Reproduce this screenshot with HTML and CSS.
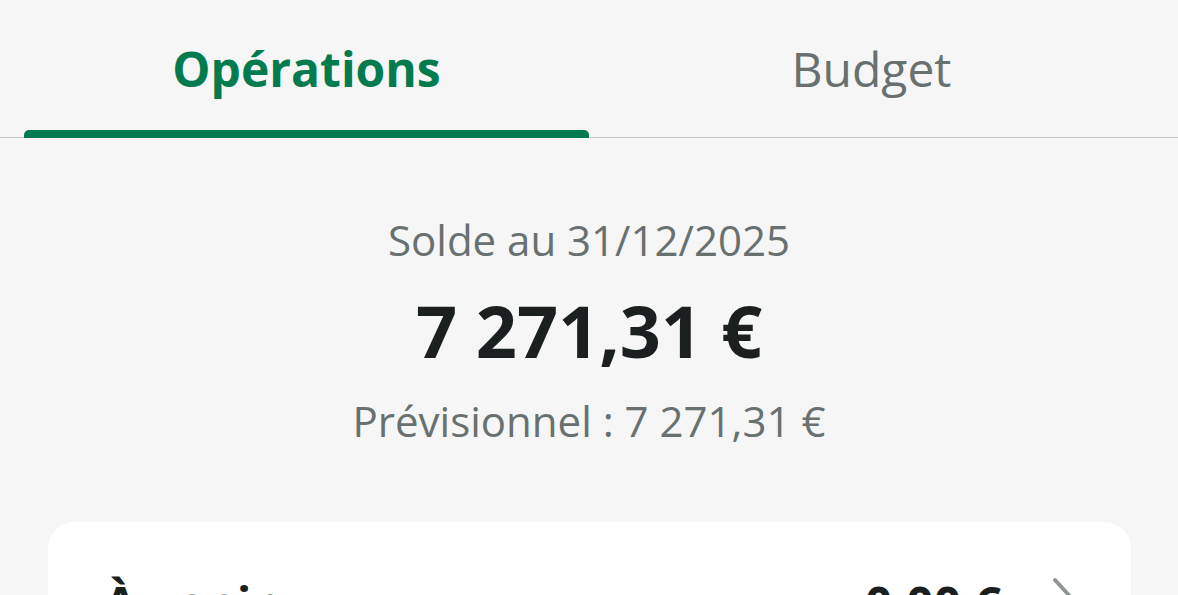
FILE: index.html
```html
<!DOCTYPE html>
<html lang="fr">
<head>
<meta charset="utf-8">
<title>Opérations</title>
<link rel="stylesheet" href="styles.css">
</head>
<body>
  <nav class="tabs">
    <div class="tab tab-active">
      <span class="tab-label">Opérations</span>
      <span class="tab-indicator"></span>
    </div>
    <div class="tab">
      <span class="tab-label">Budget</span>
    </div>
  </nav>
  <section class="summary">
    <div class="summary-label">Solde au 31/12/2025</div>
    <div class="summary-amount">7 271,31 €</div>
    <div class="summary-forecast">Prévisionnel : 7 271,31 €</div>
  </section>
  <section class="card">
    <div class="card-row">
      <span class="card-title">À venir</span>
      <span class="card-value">0,00 €</span>
      <svg class="chevron" width="32" height="56" viewBox="0 0 32 56" aria-hidden="true">
        <path d="M4 4 L26 28 L4 52" fill="none" stroke="#8f9796" stroke-width="4" stroke-linecap="round" stroke-linejoin="round"/>
      </svg>
    </div>
  </section>
</body>
</html>
```
FILE: styles.css
```css
html, body {
  margin: 0;
  padding: 0;
}
body {
  background: #f6f6f6;
  font-family: "Open Sans", "Noto Sans", sans-serif;
  color: #1b1f1f;
  overflow: hidden;
}
.tabs {
  display: flex;
  padding: 0 24px;
  height: 137px;
  border-bottom: 1px solid #c8c9c9;
}
.tab {
  flex: 1 1 0;
  display: flex;
  flex-direction: column;
  align-items: center;
  height: 138px;
  margin-bottom: -1px;
}
.tab-label {
  display: block;
  padding-top: 37px;
  font-size: 48px;
  line-height: 64px;
  color: #687170;
  flex: 1 1 auto;
}
.tab-active .tab-label {
  color: #027b4f;
  font-weight: 700;
}
.tab-indicator {
  display: block;
  align-self: stretch;
  height: 8px;
  background: #027b4f;
  border-radius: 5px 5px 0 0;
}
.summary {
  padding-top: 74px;
  text-align: center;
}
.summary-label,
.summary-forecast {
  font-size: 42px;
  line-height: 56px;
  color: #687170;
}
.summary-amount {
  margin-top: 14px;
  font-size: 72px;
  line-height: 96px;
  font-weight: 700;
  color: #1b1f1f;
}
.summary-forecast {
  margin-top: 15px;
}
.card {
  margin: 73px 47px 0 48px;
  background: #ffffff;
  border-radius: 26px;
  padding: 50px 48px 50px 56px;
}
.card-row {
  display: flex;
  align-items: center;
}
.card-title,
.card-value {
  font-size: 48px;
  line-height: 64px;
  font-weight: 700;
  color: #1b1f1f;
}
.card-title {
  flex: 1 1 auto;
}
.chevron {
  margin-left: 50px;
}
```
